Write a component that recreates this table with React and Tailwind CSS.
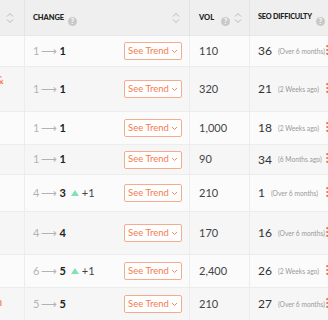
import React from "react";

const rows = [
  { h: "h-[31px]", from: "1", to: "1", up: false, vol: "110", seo: "36", ago: "(Over 6 months)", left: "", bg: "bg-[#fbfbfb]" },
  { h: "h-[45px]", from: "1", to: "1", up: false, vol: "320", seo: "21", ago: "(2 Weeks ago)", left: "&", bg: "bg-[#f6f6f6]" },
  { h: "h-[33px]", from: "1", to: "1", up: false, vol: "1,000", seo: "18", ago: "(2 Weeks ago)", left: "", bg: "bg-[#fbfbfb]" },
  { h: "h-[30px]", from: "1", to: "1", up: false, vol: "90", seo: "34", ago: "(6 Months ago)", left: "", bg: "bg-[#f6f6f6]" },
  { h: "h-[37px]", from: "4", to: "3", up: true, vol: "210", seo: "1", ago: "(Over 6 months)", left: "", bg: "bg-[#fbfbfb]" },
  { h: "h-[43px]", from: "4", to: "4", up: false, vol: "170", seo: "16", ago: "(Over 6 months)", left: "", bg: "bg-[#f6f6f6]" },
  { h: "h-[33px]", from: "6", to: "5", up: true, vol: "2,400", seo: "26", ago: "(2 Weeks ago)", left: "", bg: "bg-[#fbfbfb]" },
  { h: "h-[33px]", from: "5", to: "5", up: false, vol: "210", seo: "27", ago: "(Over 6 months)", left: "n", bg: "bg-[#f6f6f6]" },
];

function Help() {
  return (
    <span className="inline-flex w-[9px] h-[9px] rounded-full bg-[#c9c9c9] text-white text-[7px] font-bold leading-none items-center justify-center">?</span>
  );
}

function Sort() {
  return (
    <svg width="8" height="12" viewBox="0 0 8 12" className="shrink-0">
      <path d="M1 4.5 L4 1.5 L7 4.5" fill="none" stroke="#b8b8b8" strokeWidth="1" />
      <path d="M1 7.5 L4 10.5 L7 7.5" fill="none" stroke="#b8b8b8" strokeWidth="1" />
    </svg>
  );
}

export default function App() {
  return (
    <div className="w-[328px] h-[320px] overflow-hidden bg-white text-[#333]" style={{ fontFamily: "Lato, 'Liberation Sans', sans-serif" }}>
      <div className="flex h-[36px] bg-[#efefef] border-b border-[#e6e6e6]">
        <div className="w-[25px] shrink-0 flex items-center justify-center border-r border-[#e4e4e4] pr-[5px]">
          <Sort />
        </div>
        <div className="w-[165px] shrink-0 flex items-center pl-[8px] pr-[9px] border-r border-[#e4e4e4]">
          <span className="text-[7.5px] font-black tracking-[-0.1px] text-[#222]">CHANGE</span>
          <span className="ml-[4px]"><Help /></span>
          <span className="flex-1" />
          <Sort />
        </div>
        <div className="w-[60px] shrink-0 flex items-center pl-[9px] border-r border-[#e4e4e4]">
          <span className="text-[7.5px] font-black text-[#222]">VOL</span>
          <span className="ml-[7px]"><Help /></span>
          <span className="ml-[4px]"><Sort /></span>
        </div>
        <div className="flex-1 flex items-center pl-[8px] whitespace-nowrap overflow-hidden">
          <span className="text-[7.3px] font-black tracking-[-0.2px] text-[#222]">SEO DIFFICULTY</span>
          <span className="ml-[4px]"><Help /></span>
        </div>
      </div>
      {rows.map((r, i) => (
        <div key={i} className={`flex ${r.h} ${r.bg} border-b border-[#ececec]`}>
          <div className="w-[25px] shrink-0 border-r border-[#ececec] overflow-hidden">
            {r.left && (
              <div className={`text-[11px] text-[#f2743f] leading-none ml-[-4px] ${r.left === "&" ? "mt-[7px]" : "mt-[8px]"}`}>{r.left}</div>
            )}
          </div>
          <div className="w-[165px] shrink-0 flex items-center pl-[8px] pr-[7px] border-r border-[#ececec]">
            <span className="text-[11px] text-[#b3b3b3]">{r.from}</span>
            <span className="text-[11px] text-[#b3b3b3] mx-[2px]">⟶</span>
            <span className="text-[11px] font-bold text-[#222]">{r.to}</span>
            {r.up && (
              <>
                <svg width="8" height="6" viewBox="0 0 8 6" className="ml-[5px]">
                  <path d="M4 0 L8 6 L0 6 Z" fill="#7fe2b8" />
                </svg>
                <span className="text-[11px] text-[#444] ml-[3px]">+1</span>
              </>
            )}
            <span className="flex-1" />
            <div className="w-[58px] h-[18px] shrink-0 border border-[#f5ab8e] rounded-[2px] flex items-center justify-center bg-white">
              <span className="text-[9.5px] text-[#f47c4f] whitespace-nowrap">See Trend</span>
              <svg width="7" height="5" viewBox="0 0 7 5" className="ml-[2px]">
                <path d="M1 1 L3.5 3.5 L6 1" fill="none" stroke="#f47c4f" strokeWidth="0.9" />
              </svg>
            </div>
          </div>
          <div className="w-[60px] shrink-0 flex items-center pl-[9px] border-r border-[#ececec]">
            <span className="text-[11px] text-[#444]">{r.vol}</span>
          </div>
          <div className="flex-1 min-w-0 flex items-center pl-[8px] whitespace-nowrap">
            <span className="text-[12px] font-normal text-[#333] shrink-0">{r.seo}</span>
            <span className="text-[6.7px] text-[#9a9a9a] ml-[6px] shrink-0">{r.ago}</span>
            <span className="flex-1 min-w-0" />
            <svg width="3" height="10" viewBox="0 0 3 10" className="shrink-0 mb-[3px]">
              <circle cx="2.2" cy="1.2" r="1.1" fill="#f2743f" />
              <circle cx="2.2" cy="5" r="1.1" fill="#f2743f" />
              <circle cx="2.2" cy="8.8" r="1.1" fill="#f2743f" />
            </svg>
          </div>
        </div>
      ))}
    </div>
  );
}
